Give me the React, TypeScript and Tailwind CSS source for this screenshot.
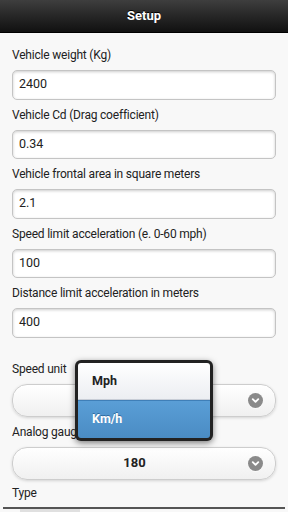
import { ChevronDown } from "lucide-react";

const fields = [
  { label: "Vehicle weight (Kg)", value: "2400" },
  { label: "Vehicle Cd (Drag coefficient)", value: "0.34" },
  { label: "Vehicle frontal area in square meters", value: "2.1" },
  { label: "Speed limit acceleration (e. 0-60 mph)", value: "100" },
  { label: "Distance limit acceleration in meters", value: "400" },
];

function Arrow() {
  return (
    <span className="w-[15px] h-[15px] rounded-full bg-[#8a8a8a] flex items-center justify-center shadow-[0_1px_0_rgba(255,255,255,0.6)]">
      <ChevronDown className="w-[11px] h-[11px] text-white" strokeWidth={4} />
    </span>
  );
}

function Select({ value }: { value: string }) {
  return (
    <div className="h-[33px] mx-3 rounded-[15px] border border-[#cdcdcd] bg-gradient-to-b from-white to-[#f0f0f0] shadow-[0_1px_3px_rgba(0,0,0,0.15)] flex items-center">
      <span className="flex-1 pl-[20px] text-center text-[13px] font-bold text-[#222]">
        {value}
      </span>
      <span className="px-[12px]">
        <Arrow />
      </span>
    </div>
  );
}

function Label({ children }: { children: string }) {
  return (
    <div className="h-[30px] px-3 flex items-center text-[12px] tracking-[-0.2px] text-[#222]">
      {children}
    </div>
  );
}

export default function App() {
  return (
    <div className="w-[288px] h-[512px] overflow-hidden bg-[#f8f8f8] relative font-['Roboto',sans-serif]">
      <header className="h-[33px] bg-gradient-to-b from-[#3e3e3e] to-[#111] border-b border-[#000] flex items-center justify-center">
        <span className="text-white text-[13px] font-bold [text-shadow:0_-1px_0_#000]">
          Setup
        </span>
      </header>

      <div className="pt-[7px]">
        {fields.map((f) => (
          <div key={f.label}>
            <Label>{f.label}</Label>
            <div className="h-[29.5px] mx-3 rounded-[5px] border border-[#c4c4c4] bg-white shadow-[inset_0_1px_3px_rgba(0,0,0,0.2)] flex items-center px-[6px] text-[12.5px] text-[#222]">
              {f.value}
            </div>
          </div>
        ))}

        <div className="h-[16px]" />
        <Label>Speed unit</Label>
        <Select value="" />
        <Label>Analog gauge max</Label>
        <Select value="180" />
        <div className="h-[27px] px-3 flex items-center text-[12px] tracking-[-0.2px] text-[#222]">
          Type
        </div>
        <div className="mx-[3px] h-[2px] bg-[#555]" />
        <div className="ml-[20px] w-[60px] h-[3px] bg-[#e0e0e0]" />
      </div>

      <div className="absolute left-[75px] top-[360px] w-[138px] h-[81px] rounded-[6px] bg-[#222] p-[3px] shadow-[0_2px_6px_rgba(0,0,0,0.5)]">
        <div className="h-full rounded-[3px] overflow-hidden flex flex-col">
          <div className="h-[37px] bg-gradient-to-b from-white to-[#eceef2] border-b border-[#c8cdd6] flex items-center pl-[14px] text-[12.5px] font-bold text-[#222]">
            Mph
          </div>
          <div className="flex-1 bg-gradient-to-b from-[#5a9ed6] to-[#4a8cc4] border-t border-[#3f7fb8] flex items-center pl-[14px] text-[12.5px] font-bold text-white [text-shadow:0_-1px_0_#2f6a9e]">
            Km/h
          </div>
        </div>
      </div>
    </div>
  );
}
